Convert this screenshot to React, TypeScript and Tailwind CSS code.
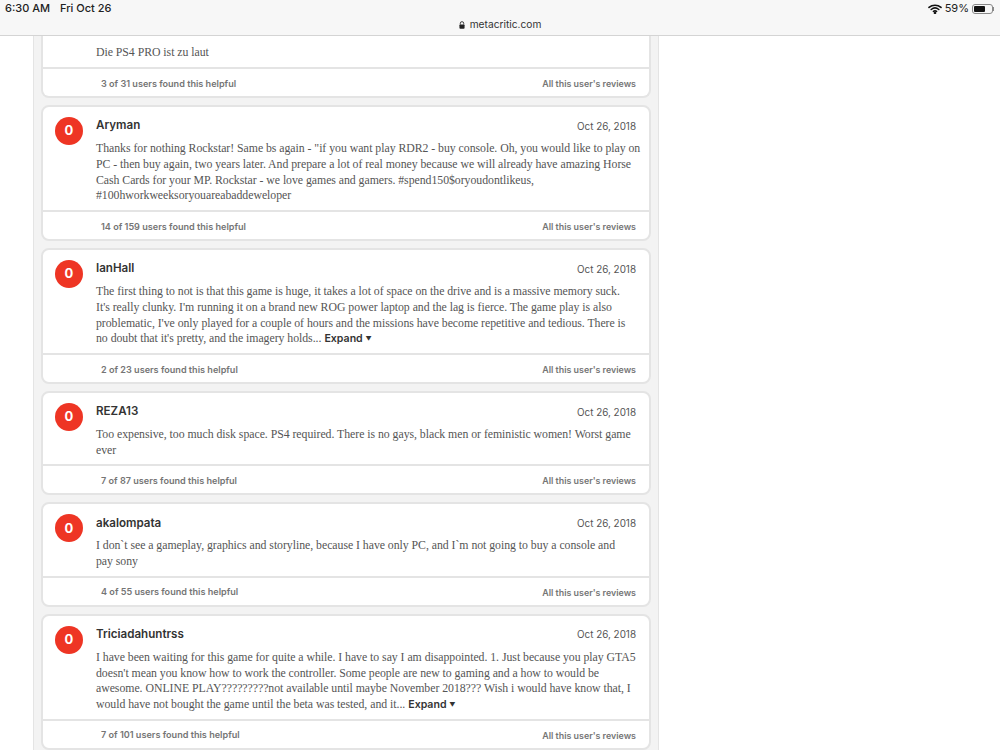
const SANS = "font-['Inter','Liberation_Sans',sans-serif]"
const SERIF = "font-['Liberation_Serif',serif] text-[11.8px] leading-[15.8px] tracking-[-0.04px] text-[#555555] oldstyle-nums"

type Review = {
  name: string
  lines: string[]
  expand?: boolean
  helpful: string
}

const reviews: Review[] = [
  {
    name: "Aryman",
    lines: [
      "Thanks for nothing Rockstar! Same bs again - \"if you want play RDR2 - buy console. Oh, you would like to play on",
      "PC - then buy again, two years later. And prepare a lot of real money because we will already have amazing Horse",
      "Cash Cards for your MP. Rockstar - we love games and gamers. #spend150$oryoudontlikeus,",
      "#100hworkweeksoryouareabaddeweloper",
    ],
    helpful: "14 of 159 users found this helpful",
  },
  {
    name: "IanHall",
    lines: [
      "The first thing to not is that this game is huge, it takes a lot of space on the drive and is a massive memory suck.",
      "It's really clunky. I'm running it on a brand new ROG power laptop and the lag is fierce. The game play is also",
      "problematic, I've only played for a couple of hours and the missions have become repetitive and tedious. There is",
      "no doubt that it's pretty, and the imagery holds...",
    ],
    expand: true,
    helpful: "2 of 23 users found this helpful",
  },
  {
    name: "REZA13",
    lines: [
      "Too expensive, too much disk space. PS4 required. There is no gays, black men or feministic women! Worst game",
      "ever",
    ],
    helpful: "7 of 87 users found this helpful",
  },
  {
    name: "akalompata",
    lines: [
      "I don`t see a gameplay, graphics and storyline, because I have only PC, and I`m not going to buy a console and",
      "pay sony",
    ],
    helpful: "4 of 55 users found this helpful",
  },
  {
    name: "Triciadahuntrss",
    lines: [
      "I have been waiting for this game for quite a while. I have to say I am disappointed. 1. Just because you play GTA5",
      "doesn't mean you know how to work the controller. Some people are new to gaming and a how to would be",
      "awesome. ONLINE PLAY?????????not available until maybe November 2018??? Wish i would have know that, I",
      "would have not bought the game until the beta was tested, and it...",
    ],
    expand: true,
    helpful: "7 of 101 users found this helpful",
  },
]

function Footer({ helpful }: { helpful: string }) {
  return (
    <div className={`flex h-[29px] items-center justify-between border-t-2 border-[#e4e4e4] pl-[58px] pr-[13px] pt-[2px] text-[9.1px] font-semibold text-[#757575] ${SANS}`}>
      <span>{helpful}</span>
      <span className="text-[8.9px]">All this user's reviews</span>
    </div>
  )
}

function ReviewCard({ review }: { review: Review }) {
  return (
    <div className="rounded-lg border-2 border-[#e4e4e4] bg-white">
      <div className="flex pb-[5.8px] pl-[12px] pr-[13px] pt-[10px]">
        <div className={`mr-[13px] flex h-[28px] w-[28px] shrink-0 items-center justify-center rounded-full bg-[#ee3524] text-[13px] font-bold text-white ${SANS}`}>
          0
        </div>
        <div className="min-w-0 flex-1 pt-[1px]">
          <div className={`flex h-[16px] items-center justify-between ${SANS}`}>
            <span className="text-[11.6px] font-semibold text-[#333333]">{review.name}</span>
            <span className="text-[9.9px] text-[#555555]">Oct 26, 2018</span>
          </div>
          <div className={`mt-[7px] ${SERIF}`}>
            {review.lines.map((line, i) => (
              <div key={i} className="whitespace-nowrap">
                {line}
                {review.expand && i === review.lines.length - 1 && (
                  <span className={`ml-[3px] text-[10.6px] font-semibold tracking-normal text-[#333333] ${SANS}`}>
                    Expand <span className="align-[1px] text-[6px]">▼</span>
                  </span>
                )}
              </div>
            ))}
          </div>
        </div>
      </div>
      <Footer helpful={review.helpful} />
    </div>
  )
}

export default function App() {
  return (
    <div className="flex h-[750px] w-[1000px] flex-col overflow-hidden bg-white">
      {/* iPad status bar + url */}
      <div className={`flex h-[36px] shrink-0 flex-col border-b border-[#d4d4d4] bg-[#f7f7f7] ${SANS}`}>
        <div className="flex h-[17px] items-center justify-between pl-[5px] pr-[6px] text-[11px] text-[#222222]">
          <div className="flex gap-[10px] font-medium">
            <span>6:30 AM</span>
            <span>Fri Oct 26</span>
          </div>
          <div className="flex items-center gap-[3px]">
            <svg width="14" height="10" viewBox="0 0 14 10" fill="none" stroke="#111111" strokeLinecap="round" strokeWidth="1.6">
              <path d="M1 3.4C4.4 .5 9.6 .5 13 3.4" />
              <path d="M3.2 5.5c2.2 -1.8 5.4 -1.8 7.6 0" />
              <path d="M5.4 7.4c1 -.7 2.2 -.7 3.2 0" />
              <circle cx="7" cy="9" r=".5" fill="#111111" />
            </svg>
            <span>59%</span>
            <div className="flex items-center">
              <div className="h-[10px] w-[21px] rounded-[3px] border border-[#888888] p-[1px]">
                <div className="h-full w-[11px] rounded-[1px] bg-[#111111]" />
              </div>
              <div className="h-[4px] w-[1px] bg-[#888888]" />
            </div>
          </div>
        </div>
        <div className="flex h-[15px] items-center justify-center gap-[5px] text-[10.2px] text-[#333333]">
          <svg width="6" height="8" viewBox="0 0 7 9">
            <path d="M1.5 4V2.6a2 2 0 0 1 4 0V4" fill="none" stroke="#222222" />
            <rect x="0.5" y="3.8" width="6" height="5" rx="1" fill="#222222" />
          </svg>
          <span>metacritic.com</span>
        </div>
      </div>

      {/* Page column */}
      <div className="ml-[33px] w-[626px] flex-1 border-x border-[#e4e4e4] bg-[#f3f3f3] px-[7px]">
        <div className="flex flex-col gap-[7px]">
          <div className="rounded-b-lg border-2 border-t-0 border-[#e4e4e4] bg-white">
            <div className={`h-[31px] pl-[53px] pt-[9px] ${SERIF}`}>Die PS4 PRO ist zu laut</div>
            <Footer helpful="3 of 31 users found this helpful" />
          </div>
          {reviews.map((review) => (
            <ReviewCard key={review.name} review={review} />
          ))}
        </div>
      </div>
    </div>
  )
}
